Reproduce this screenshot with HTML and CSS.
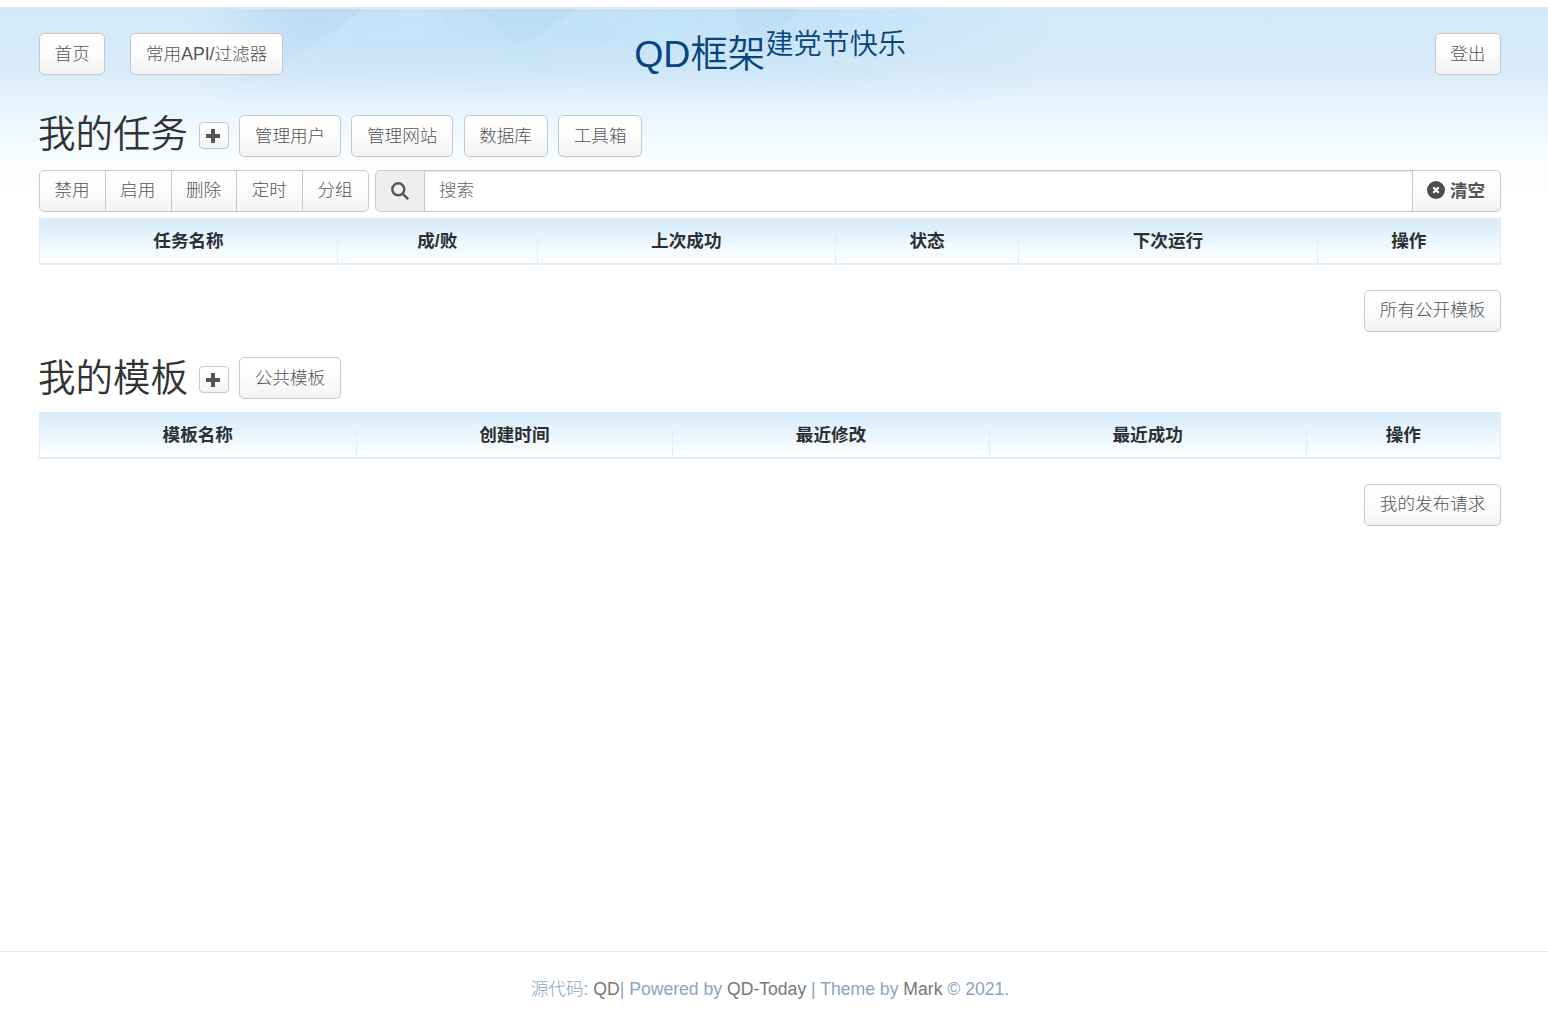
FILE: index.html
```html
<!DOCTYPE html>
<html lang="zh-CN">
<head>
  <meta charset="UTF-8">
  <meta name="viewport" content="width=device-width, initial-scale=1.0">
  <title>QD框架</title>
  <link rel="stylesheet" href="styles.css">
</head>
<body>
  <div class="page">
    <svg class="facets" viewBox="0 0 1548 170" preserveAspectRatio="none" aria-hidden="true">
      <defs>
        <linearGradient id="band" x1="0" x2="1" y1="0" y2="0">
          <stop offset="0" stop-color="#bfdcf4" stop-opacity="0"/>
          <stop offset=".13" stop-color="#bfdcf4" stop-opacity=".75"/>
          <stop offset=".7" stop-color="#bfdff5" stop-opacity=".8"/>
          <stop offset="1" stop-color="#bfdff5" stop-opacity="0"/>
        </linearGradient>
        <linearGradient id="fade" x1="0" x2="0" y1="0" y2="1">
          <stop offset="0" stop-color="#fff"/>
          <stop offset=".4" stop-color="#bbb"/>
          <stop offset="1" stop-color="#000"/>
        </linearGradient>
        <linearGradient id="edge" x1="0" x2="1" y1="0" y2="0">
          <stop offset="0" stop-color="#b5d3ef" stop-opacity="0"/>
          <stop offset=".6" stop-color="#b5d3ef" stop-opacity=".4"/>
        </linearGradient>
        <mask id="fadeMask"><rect width="1548" height="95" fill="url(#fade)"/></mask>
      </defs>
      <g mask="url(#fadeMask)">
        <rect x="190" width="860" height="95" fill="url(#band)"/>
        <path d="M210 0H364L300 45L270 72H210Z" fill="url(#edge)"/>
        <path d="M364 0H438L453 27L354 31L290 70Z" fill="#c8e7fb" opacity=".4"/>
        <path d="M477 0H575L542 25L516 36Z" fill="#acd0ed" opacity=".35"/>
        <path d="M438 0H477L516 36L453 27Z" fill="#bcdcf4" opacity=".3"/>
        <path d="M542 25L594 4L627 25L596 40L560 34Z" fill="#b5def5" opacity=".3"/>
        <path d="M627 25L677 6L705 20L650 37L596 40Z" fill="#c0e5fa" opacity=".4"/>
        <path d="M735 0H800L765 34L740 25Z" fill="#aaceed" opacity=".25"/>
        <path d="M516 36L542 25L560 70L490 50Z" fill="#bddcf3" opacity=".3"/>
      </g>
    </svg>

    <header class="navbar">
      <div class="nav-left">
        <a class="btn">首页</a>
        <a class="btn">常用API/过滤器</a>
      </div>
      <h1 class="brand">QD框架<sup>建党节快乐</sup></h1>
      <div class="nav-right"><a class="btn">登出</a></div>
    </header>

    <main>
      <section class="tasks">
        <div class="section-head">
          <h2>我的任务</h2>
          <button class="btn btn-xs"><svg class="plus" viewBox="0 0 14 14"><path d="M5 0h4v5h5v4H9v5H5V9H0V5h5z"/></svg></button>
          <a class="btn">管理用户</a>
          <a class="btn">管理网站</a>
          <a class="btn">数据库</a>
          <a class="btn">工具箱</a>
        </div>
        <div class="toolbar">
          <div class="btn-group">
            <button class="btn">禁用</button>
            <button class="btn">启用</button>
            <button class="btn">删除</button>
            <button class="btn">定时</button>
            <button class="btn">分组</button>
          </div>
          <div class="search">
            <span class="addon"><svg class="magnifier" viewBox="0 0 18 18"><circle cx="7.3" cy="7.3" r="6"/><path d="M11.8 11.8l5.4 5.4"/></svg></span>
            <input type="text" placeholder="搜索">
            <button class="btn clear"><svg class="remove" viewBox="0 0 18 18"><circle cx="9" cy="9" r="9"/><path d="M6.3 6.3l5.4 5.4M11.7 6.3l-5.4 5.4"/></svg>清空</button>
          </div>
        </div>
        <table class="task-table">
          <thead>
            <tr><th>任务名称</th><th>成/败</th><th>上次成功</th><th>状态</th><th>下次运行</th><th>操作</th></tr>
          </thead>
        </table>
        <div class="more"><a class="btn">所有公开模板</a></div>
      </section>

      <section class="templates">
        <div class="section-head">
          <h2>我的模板</h2>
          <button class="btn btn-xs"><svg class="plus" viewBox="0 0 14 14"><path d="M5 0h4v5h5v4H9v5H5V9H0V5h5z"/></svg></button>
          <a class="btn">公共模板</a>
        </div>
        <table class="tpl-table">
          <thead>
            <tr><th>模板名称</th><th>创建时间</th><th>最近修改</th><th>最近成功</th><th>操作</th></tr>
          </thead>
        </table>
        <div class="more"><a class="btn">我的发布请求</a></div>
      </section>
    </main>

    <footer>源代码: <a>QD</a>| Powered by <a>QD-Today</a> | Theme by <a>Mark</a> © 2021.</footer>
  </div>
</body>
</html>
```

FILE: styles.css
```css
* {
  box-sizing: border-box;
}

body {
  margin: 0;
  padding-top: 7px;
  background: #fff;
  color: #333;
  font-family: "Liberation Sans", "Noto Sans CJK SC", sans-serif;
  font-size: 17.6px;
  font-weight: 300;
  line-height: 25px;
}

.page {
  position: relative;
  display: flex;
  flex-direction: column;
  height: 1006px;
  border-top: 2px solid #dfe7ee;
  background: linear-gradient(#d2eafa 0, #d8ebf9 62px, #e5f3fd 92px, #edf7fd 115px, #f8fcfe 145px, #fdfdff 168px, #fff 200px) no-repeat;
}

.facets {
  position: absolute;
  top: 0;
  left: 0;
  width: 100%;
  height: 170px;
}

.navbar,
main {
  position: relative;
  padding: 0 47px 0 39px;
}

.navbar {
  display: grid;
  grid-template-columns: 1fr auto 1fr;
  height: 106px;
  padding-top: 24px;
  align-items: start;
}

.nav-left {
  display: flex;
  gap: 25px;
}

.nav-right {
  text-align: right;
}

.brand {
  margin: 0;
  color: #08457e;
  font-size: 37.5px;
  font-weight: 350;
  line-height: 42px;
  white-space: nowrap;
}

.brand sup {
  font-size: 28.1px;
  line-height: 0;
  position: relative;
  top: -13px;
  vertical-align: baseline;
}

.btn {
  display: inline-block;
  height: 42px;
  padding: 8px 14.6px 7px;
  border: 1px solid #c8c8cc;
  border-radius: 5px;
  background: linear-gradient(#fff, #fdfdfd 40%, #f3f3f3);
  color: #555;
  font: inherit;
  line-height: 25px;
  white-space: nowrap;
  cursor: pointer;
}

.section-head {
  display: flex;
  height: 42px;
  gap: 10.6px;
}

h2 {
  margin: 0 0 0 -1px;
  font-size: 37.5px;
  font-weight: 350;
  line-height: 38px;
}

.templates h2 {
  line-height: 42px;
}

.btn-xs {
  display: flex;
  width: 30px;
  height: 27px;
  margin-top: 7px;
  padding: 0 1px 0 0;
  align-items: center;
  justify-content: center;
  border-radius: 4px;
}

.templates .btn-xs {
  margin-top: 9px;
}

.plus {
  width: 14px;
  height: 14px;
  margin-top: 1px;
  fill: #555;
}

.toolbar {
  display: flex;
  gap: 6px;
  margin-top: 13px;
}

.btn-group {
  display: flex;
  width: 330px;
}

.btn-group .btn {
  flex: 1;
  padding: 6px 1px 8px 0;
  margin-left: -1px;
  border-radius: 0;
}

.btn-group .btn:first-child {
  margin-left: 0;
  border-radius: 5px 0 0 5px;
}

.btn-group .btn:last-child {
  border-radius: 0 5px 5px 0;
}

.search {
  display: flex;
  flex: 1;
}

.addon {
  display: flex;
  width: 50px;
  height: 42px;
  align-items: center;
  justify-content: center;
  border: 1px solid #ccc;
  border-radius: 5px 0 0 5px;
  background: #eee;
}

.magnifier {
  width: 18px;
  height: 18px;
  margin-top: -1px;
  fill: none;
  stroke: #555;
  stroke-width: 2.4;
}

.search input {
  flex: 1;
  min-width: 0;
  height: 42px;
  margin: 0 -1px;
  padding: 6px 14px 8px;
  border: 1px solid #c8c8cc;
  background: #fff;
  box-shadow: inset 0 1px 1px rgba(0, 0, 0, .1);
  font: inherit;
}

.search input::placeholder {
  color: #666;
}

.clear {
  display: flex;
  width: 89px;
  padding: 7px 14px;
  align-items: center;
  gap: 5px;
  border-radius: 0 5px 5px 0;
  font-weight: bold;
}

.remove {
  width: 18px;
  height: 18px;
  margin-top: -2px;
  fill: #4d4d4d;
}

.remove path {
  stroke: #fff;
  stroke-width: 2.2;
}

table {
  width: 1462px;
  height: 47px;
  margin-top: 6px;
  border: 1px solid #e0edf5;
  border-bottom: 2px solid #e3edf4;
  border-spacing: 0;
  table-layout: fixed;
  background: linear-gradient(#d8ecfa, #e9f5fc 45%, #fff);
}

th {
  padding: 0;
  border-left: 1px solid #e2edf5;
  color: #2c3034;
  font-weight: bold;
}

th:first-child {
  border-left: 0;
}

.task-table th:nth-child(1) {
  width: 297px;
}

.task-table th:nth-child(3),
.task-table th:nth-child(5) {
  width: 298.6px;
}

.task-table th:nth-child(2) {
  width: 199.5px;
}

.task-table th:nth-child(4) {
  width: 183px;
}

.tpl-table {
  margin-top: 13px;
}

.tpl-table th:not(:last-child) {
  width: 316.7px;
}

.tpl-table th:first-child:not(:last-child) {
  width: 315.5px;
}

.more {
  height: 42px;
  margin-top: 25px;
  text-align: right;
}

.more .btn {
  padding-top: 7px;
}

.templates {
  margin-top: 25px;
}

footer {
  margin-top: auto;
  height: 62px;
  padding: 25px 8px 0 0;
  border-top: 1px solid #e8e8e8;
  color: #86a6c3;
  text-align: center;
}

footer a {
  color: #777;
}
```
